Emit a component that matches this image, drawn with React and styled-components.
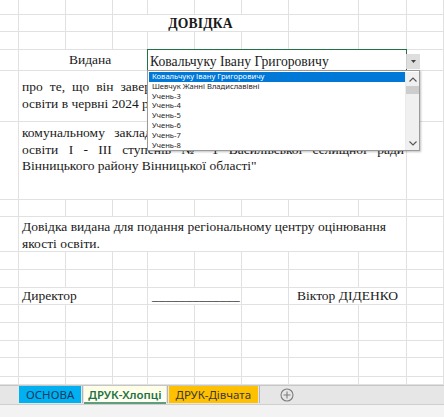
import React from "react";
import styled, { createGlobalStyle } from "styled-components";

const GlobalStyle = createGlobalStyle`
  html, body {
    margin: 0;
    padding: 0;
    background: #fff;
    overflow: hidden;
  }
`;

const COLS = [19, 47, 47, 35, 47, 47, 47, 70, 48, 37];
const ROWS = [15, 17, 18, 21, 51, 78, 17, 35, 18, 18, 17, 18, 18, 17, 19, 8];

const students = [
  "Ковальчуку Івану Григоровичу",
  "Шевчук Жанні Владиславівні",
  "Учень-3",
  "Учень-4",
  "Учень-5",
  "Учень-6",
  "Учень-7",
  "Учень-8",
];

const App = () => {
  const plain = (r) =>
    COLS.map((_, c) => <Cell key={`${r}-${c}`} $row={r} $col={c} />);

  return (
    <Window>
      <GlobalStyle />
      <Sheet>
        {plain(1)}
        <Cell $row={2} $col={0} />
        <Cell $row={2} $col={1} />
        <Cell $row={2} $col={2} />
        <Cell $row={2} $col={3} $span={4} $align="center" $pad="0">
          <Title>ДОВІДКА</Title>
        </Cell>
        <Cell $row={2} $col={7} />
        <Cell $row={2} $col={8} />
        <Cell $row={2} $col={9} />
        {plain(3)}

        <Cell $row={4} $col={0} />
        <Cell $row={4} $col={1} $span={3} $pad="0 0 0 50px">
          <Text>Видана</Text>
        </Cell>
        <Picker $row={4} $col={4} $span={5}>
          <PickerValue>Ковальчуку Івану Григоровичу</PickerValue>
          <ArrowButton>
            <svg width="5" height="3" viewBox="0 0 5 3">
              <path d="M0 0h5L2.5 3z" fill="#444" />
            </svg>
          </ArrowButton>
          <List>
            <Items>
              {students.map((s, i) => (
                <Item key={s} $active={i === 0}>
                  {s}
                </Item>
              ))}
            </Items>
            <ScrollBar>
              <ScrollArrow>
                <svg width="8" height="5" viewBox="0 0 8 5">
                  <path d="M0.5 4.5L4 1l3.5 3.5" fill="none" stroke="#555" strokeWidth="1.1" />
                </svg>
              </ScrollArrow>
              <Thumb />
              <ScrollTrack />
              <ScrollArrow>
                <svg width="8" height="5" viewBox="0 0 8 5">
                  <path d="M0.5 0.5L4 4l3.5-3.5" fill="none" stroke="#555" strokeWidth="1.1" />
                </svg>
              </ScrollArrow>
            </ScrollBar>
          </List>
        </Picker>
        <Cell $row={4} $col={9} />

        <Cell $row={5} $col={0} />
        <Cell $row={5} $col={1} $span={8} $valign="center">
          <Para>
            <Line $justify>про те, що він завершив навчання у закладі повної середньої</Line>
            <Line>освіти в червні 2024 року в</Line>
          </Para>
        </Cell>
        <Cell $row={5} $col={9} />

        <Cell $row={6} $col={0} />
        <Cell $row={6} $col={1} $span={8} $valign="flex-start" $pad="3px 0 0 3px">
          <Para>
            <Line $justify>комунальному закладі "Василівський заклад загальної освіти</Line>
            <Line $justify>освіти I - III ступенів № 1 Василівської селищної ради</Line>
            <Line>Вінницького району Вінницької області"</Line>
          </Para>
        </Cell>
        <Cell $row={6} $col={9} />

        {plain(7)}

        <Cell $row={8} $col={0} />
        <Cell $row={8} $col={1} $span={8} $valign="flex-start" $pad="2px 0 0 3px">
          <Para>
            <Line>Довідка видана для подання регіональному центру оцінювання</Line>
            <Line>якості освіти.</Line>
          </Para>
        </Cell>
        <Cell $row={8} $col={9} />

        {plain(9)}
        {plain(10)}

        <Cell $row={11} $col={0} />
        <Cell $row={11} $col={1} $span={2}>
          <Text>Директор</Text>
        </Cell>
        <Cell $row={11} $col={3} />
        <Cell $row={11} $col={4} $span={2} $pad="0 0 0 4px">
          <Text>_____________</Text>
        </Cell>
        <Cell $row={11} $col={6} />
        <Cell $row={11} $col={7} $span={2} $pad="0 0 0 8px">
          <Text>Віктор ДІДЕНКО</Text>
        </Cell>
        <Cell $row={11} $col={9} />

        {plain(12)}
        {plain(13)}
        {plain(14)}
        {plain(15)}
        {plain(16)}
      </Sheet>

      <TabBar>
        <Tab $bg="#00b0f0" $color="#1b3a63">ОСНОВА</Tab>
        <Sep />
        <ActiveTab>ДРУК-Хлопці</ActiveTab>
        <Sep />
        <Tab $bg="#ffc000" $color="#3a3a3a">ДРУК-Дівчата</Tab>
        <Sep />
        <AddSheet>
          <svg width="14" height="14" viewBox="0 0 14 14">
            <circle cx="7" cy="7" r="6" fill="none" stroke="#7d7d7d" strokeWidth="1.1" />
            <path d="M7 3.5v7M3.5 7h7" stroke="#7d7d7d" strokeWidth="1.1" />
          </svg>
        </AddSheet>
      </TabBar>
      <StatusArea />
    </Window>
  );
};

const Window = styled.div`
  width: 444px;
  height: 417px;
  display: flex;
  flex-direction: column;
  font-family: "Liberation Serif", "Times New Roman", serif;
  color: #1a1a1a;
`;

const Sheet = styled.div`
  display: grid;
  grid-template-columns: ${COLS.map((c) => `${c}px`).join(" ")};
  grid-template-rows: ${ROWS.map((r) => `${r}px`).join(" ")};
  flex: none;
  background: #fff;
`;

const Cell = styled.div`
  grid-row: ${(p) => p.$row};
  grid-column: ${(p) => p.$col + 1} / span ${(p) => p.$span || 1};
  box-sizing: border-box;
  border-right: 1px solid #e1e1e1;
  border-bottom: 1px solid #e1e1e1;
  display: flex;
  align-items: ${(p) => p.$valign || "center"};
  justify-content: ${(p) => p.$align || "flex-start"};
  padding: ${(p) => p.$pad || "0 0 0 3px"};
  min-width: 0;
`;

const Title = styled.span`
  font-weight: bold;
  font-size: 13.6px;
  letter-spacing: 0.2px;
  margin-top: 1px;
`;

const Text = styled.span`
  font-size: 13.5px;
  white-space: nowrap;
`;

const Para = styled.div`
  width: 382px;
  font-size: 13.5px;
  line-height: 16.7px;
`;

const Line = styled.div`
  white-space: nowrap;
  ${(p) =>
    p.$justify &&
    `
    white-space: normal;
    text-align: justify;
    text-align-last: justify;
    height: 16.7px;
    overflow: hidden;
  `}
`;

const Picker = styled(Cell)`
  position: relative;
  border: 1px solid #217346;
  margin: -1px 0 0 -1px;
  padding: 0 0 0 2px;
  z-index: 2;
`;

const PickerValue = styled.span`
  font-size: 15px;
  white-space: nowrap;
  margin-top: 2px;
  transform: scaleX(0.91);
  transform-origin: left center;
`;

const ArrowButton = styled.div`
  position: absolute;
  left: 100%;
  top: 4px;
  width: 13px;
  height: 15px;
  background: #dedede;
  border-left: 1px solid #cfcfcf;
  display: flex;
  align-items: center;
  justify-content: center;
`;

const List = styled.div`
  position: absolute;
  top: 100%;
  left: -1px;
  width: 273px;
  height: 81px;
  box-sizing: border-box;
  background: #fff;
  border: 1px solid #9a9a9a;
  box-shadow: 1px 1px 2px rgba(0, 0, 0, 0.25);
  display: flex;
  padding: 1px 0 0 1px;
`;

const Items = styled.div`
  flex: 1;
  display: flex;
  flex-direction: column;
`;

const Item = styled.div`
  height: 9.8px;
  line-height: 9.8px;
  font-family: "Noto Sans", "Open Sans", sans-serif;
  font-size: 7.6px;
  padding-left: 3px;
  color: ${(p) => (p.$active ? "#fff" : "#222")};
  background: ${(p) => (p.$active ? "#0078d7" : "transparent")};
  white-space: nowrap;
`;

const ScrollBar = styled.div`
  width: 13px;
  background: #f0f0f0;
  display: flex;
  flex-direction: column;
  border-left: 1px solid #ebebeb;
`;

const ScrollArrow = styled.div`
  height: 14px;
  display: flex;
  align-items: center;
  justify-content: center;
`;

const Thumb = styled.div`
  height: 8px;
  background: #cdcdcd;
`;

const ScrollTrack = styled.div`
  flex: 1;
`;

const TabBar = styled.div`
  height: 18px;
  flex: none;
  background: #e6e6e6;
  border-top: 1px solid #c6c6c6;
  border-bottom: 1px solid #cfcfcf;
  display: flex;
  align-items: stretch;
  padding-left: 19px;
  font-family: "Noto Sans", "Open Sans", sans-serif;
  font-size: 11.5px;
`;

const Tab = styled.div`
  background: ${(p) => p.$bg};
  color: ${(p) => p.$color};
  padding: 0 7px;
  display: flex;
  align-items: center;
  margin-bottom: 1px;
`;

const ActiveTab = styled.div`
  background: linear-gradient(#ffffe6, #fffff4);
  color: #217346;
  font-weight: 600;
  padding: 0 4px;
  display: flex;
  align-items: center;
  border-bottom: 2px solid #5f9e7a;
  box-sizing: border-box;
`;

const Sep = styled.div`
  width: 1px;
  margin: 0 1px 1px;
  background: #b5b5b5;
`;

const AddSheet = styled.div`
  margin-left: 19px;
  display: flex;
  align-items: center;
`;

const StatusArea = styled.div`
  flex: 1;
  background: #f3f3f3;
`;

export default App;
